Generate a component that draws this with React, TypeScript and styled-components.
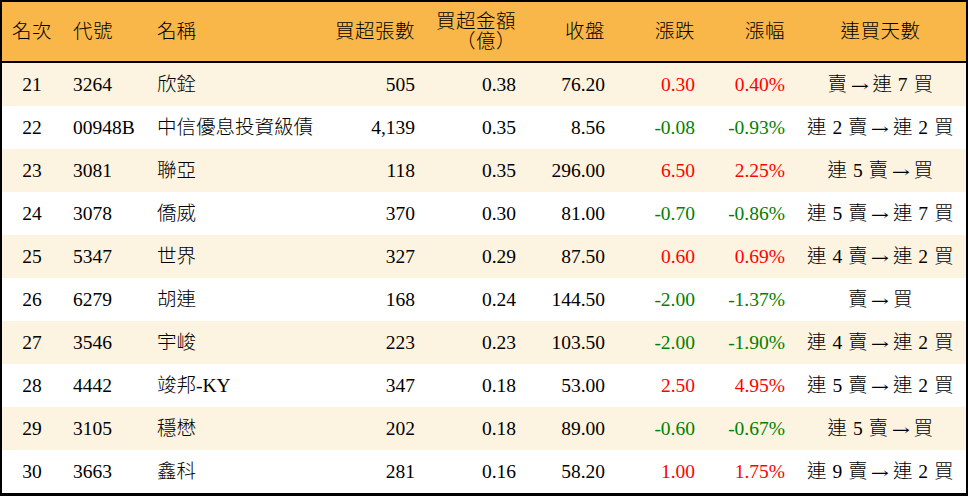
import React from "react";
import styled, { createGlobalStyle } from "styled-components";

const GlobalStyle = createGlobalStyle`
  html, body {
    margin: 0;
    padding: 0;
    background: #ffffff;
  }
  body {
    font-family: "Liberation Serif", "Noto Sans CJK TC", serif;
    color: #000000;
  }
`;

const COLS = "60px 85px 183px 95px 101px 89px 90px 90px 171px";

type Align = "left" | "right" | "center";
type Tone = "up" | "down" | undefined;

interface StockRow {
  rank: number;
  code: string;
  name: string;
  lots: string;
  amount: string;
  close: string;
  change: string;
  pct: string;
  sold: string;
  bought: string;
}

const rows: StockRow[] = [
  { rank: 21, code: "3264", name: "欣銓", lots: "505", amount: "0.38", close: "76.20", change: "0.30", pct: "0.40%", sold: "賣", bought: "連 7 買" },
  { rank: 22, code: "00948B", name: "中信優息投資級債", lots: "4,139", amount: "0.35", close: "8.56", change: "-0.08", pct: "-0.93%", sold: "連 2 賣", bought: "連 2 買" },
  { rank: 23, code: "3081", name: "聯亞", lots: "118", amount: "0.35", close: "296.00", change: "6.50", pct: "2.25%", sold: "連 5 賣", bought: "買" },
  { rank: 24, code: "3078", name: "僑威", lots: "370", amount: "0.30", close: "81.00", change: "-0.70", pct: "-0.86%", sold: "連 5 賣", bought: "連 7 買" },
  { rank: 25, code: "5347", name: "世界", lots: "327", amount: "0.29", close: "87.50", change: "0.60", pct: "0.69%", sold: "連 4 賣", bought: "連 2 買" },
  { rank: 26, code: "6279", name: "胡連", lots: "168", amount: "0.24", close: "144.50", change: "-2.00", pct: "-1.37%", sold: "賣", bought: "買" },
  { rank: 27, code: "3546", name: "宇峻", lots: "223", amount: "0.23", close: "103.50", change: "-2.00", pct: "-1.90%", sold: "連 4 賣", bought: "連 2 買" },
  { rank: 28, code: "4442", name: "竣邦-KY", lots: "347", amount: "0.18", close: "53.00", change: "2.50", pct: "4.95%", sold: "連 5 賣", bought: "連 2 買" },
  { rank: 29, code: "3105", name: "穩懋", lots: "202", amount: "0.18", close: "89.00", change: "-0.60", pct: "-0.67%", sold: "連 5 賣", bought: "買" },
  { rank: 30, code: "3663", name: "鑫科", lots: "281", amount: "0.16", close: "58.20", change: "1.00", pct: "1.75%", sold: "連 9 賣", bought: "連 2 買" },
];

const Board = styled.div`
  width: 968px;
  height: 496px;
  box-sizing: border-box;
  border: 2px solid #000000;
  border-bottom-width: 3px;
  display: flex;
  flex-direction: column;
  overflow: hidden;
`;

const HeaderRow = styled.div`
  display: grid;
  grid-template-columns: ${COLS};
  height: 59px;
  background: #f9b74a;
  border-bottom: 2px solid #000000;
`;

const BodyRow = styled.div<{ $shaded: boolean }>`
  display: grid;
  grid-template-columns: ${COLS};
  height: 43px;
  background: ${(p) => (p.$shaded ? "#fdf3e1" : "#ffffff")};
`;

const Cell = styled.div<{ $align: Align; $tone?: Tone }>`
  display: flex;
  align-items: center;
  justify-content: ${(p) =>
    p.$align === "left" ? "flex-start" : p.$align === "right" ? "flex-end" : "center"};
  text-align: ${(p) => p.$align};
  padding: ${(p) =>
    p.$align === "left" ? "0 0 0 11px" : p.$align === "right" ? "0 10px 0 0" : "0"};
  font-size: 19.5px;
  font-weight: 300;
  line-height: 20px;
  white-space: nowrap;
  color: ${(p) => (p.$tone === "up" ? "#ff0000" : p.$tone === "down" ? "#008000" : "#000000")};
`;

const HeadCell = styled(Cell)`
  letter-spacing: 0.5px;
`;

const TwoLine = styled.span`
  display: block;
  line-height: 20px;
`;

const NameCell = styled(Cell)`
  padding-left: 10px;
`;

const StreakText = styled.span`
  letter-spacing: 0.5px;
`;

const Arrow = styled.span`
  display: inline-block;
  margin: 0 5px 0 4px;
  font-family: "DejaVu Serif", serif;
  font-size: 19px;
  transform: scaleX(1.15) scaleY(0.8);
`;

const toneOf = (v: string): Tone => (v.startsWith("-") ? "down" : "up");

export default function App() {
  return (
    <>
      <GlobalStyle />
      <Board>
        <HeaderRow>
          <HeadCell $align="center">名次</HeadCell>
          <HeadCell $align="left">代號</HeadCell>
          <NameCell $align="left">名稱</NameCell>
          <HeadCell $align="right">買超張數</HeadCell>
          <HeadCell $align="right">
            <TwoLine>
              買超金額
              <br />
              （億）
            </TwoLine>
          </HeadCell>
          <HeadCell $align="right">收盤</HeadCell>
          <HeadCell $align="right">漲跌</HeadCell>
          <HeadCell $align="right">漲幅</HeadCell>
          <HeadCell $align="center">連買天數</HeadCell>
        </HeaderRow>
        {rows.map((r, i) => (
          <BodyRow key={r.rank} $shaded={i % 2 === 0}>
            <Cell $align="center">{r.rank}</Cell>
            <Cell $align="left">{r.code}</Cell>
            <NameCell $align="left">{r.name}</NameCell>
            <Cell $align="right">{r.lots}</Cell>
            <Cell $align="right">{r.amount}</Cell>
            <Cell $align="right">{r.close}</Cell>
            <Cell $align="right" $tone={toneOf(r.change)}>{r.change}</Cell>
            <Cell $align="right" $tone={toneOf(r.pct)}>{r.pct}</Cell>
            <Cell $align="center">
              <StreakText>{r.sold}</StreakText>
              <Arrow>→</Arrow>
              <StreakText>{r.bought}</StreakText>
            </Cell>
          </BodyRow>
        ))}
      </Board>
    </>
  );
}
